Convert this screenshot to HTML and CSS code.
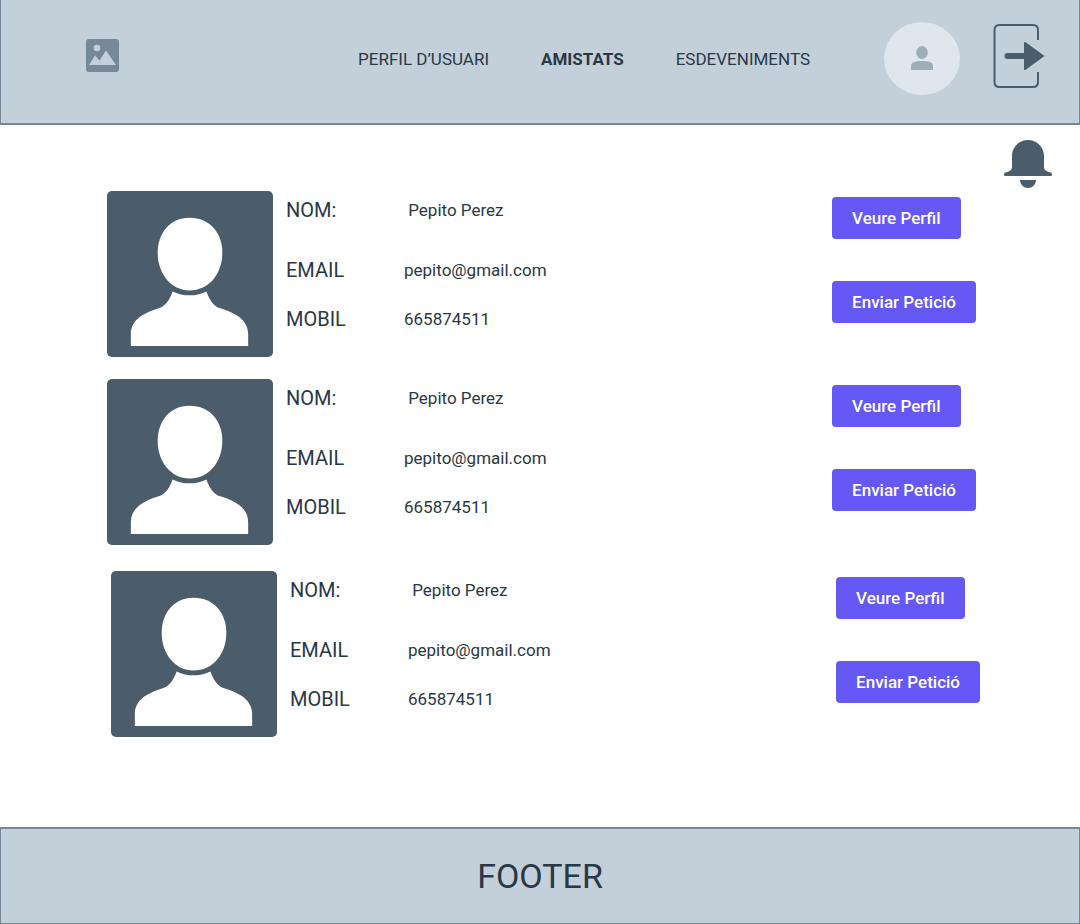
FILE: index.html
```html
<!DOCTYPE html>
<html lang="ca">
<head>
<meta charset="utf-8">
<meta name="viewport" content="width=device-width, initial-scale=1">
<title>Amistats</title>
<link rel="stylesheet" href="styles.css">
</head>
<body>
<svg class="sprite" aria-hidden="true">
  <symbol id="portrait" viewBox="0 0 167 167">
    <rect width="167" height="167" rx="5" fill="#4b5c6b"/>
    <path fill="#fff" d="M83 27C104 27 116 43 116 62C116 84 102 100 83 100C65 100 51 84 51 62C51 43 63 27 83 27Z"/>
    <path fill="#fff" d="M66 101Q83 109 100 101C103 109 107 116 114 118C130 123 142 130 142 144V156H24V144C24 130 36 123 52 118C60 115 63 109 66 101Z"/>
  </symbol>
</svg>

<header class="header">
  <a class="logo" href="#" aria-label="Inici">
    <svg width="34" height="40" viewBox="0 0 34 40" aria-hidden="true">
      <rect x="0" y="0" width="33" height="33" rx="3" fill="#778899"/>
      <circle cx="11" cy="9" r="3.3" fill="#c3cfd9"/>
      <path d="M3 26L9 16.500L13.500 21.500L20 11.500L30 26Z" fill="#c3cfd9"/>
    </svg>
  </a>
  <nav class="nav">
    <a class="nav-link" href="#">PERFIL D’USUARI</a>
    <a class="nav-link nav-link-active" href="#" aria-current="page">AMISTATS</a>
    <a class="nav-link" href="#">ESDEVENIMENTS</a>
  </nav>
  <div class="account">
    <a href="#" aria-label="El meu compte">
      <svg width="76" height="73" viewBox="0 0 76 73" aria-hidden="true">
        <ellipse cx="38" cy="36.500" rx="38" ry="36.500" fill="#dfe6ee"/>
        <ellipse cx="38" cy="30.500" rx="5.800" ry="6.500" fill="#9eadba"/>
        <path d="M27 48V44C27 40 32 39 38 39S49 40 49 44V48Z" fill="#9eadba"/>
      </svg>
    </a>
    <button class="icon-button" type="button" aria-label="Tancar sessió">
      <svg width="52" height="73" viewBox="0 0 52 73" aria-hidden="true">
        <path d="M45 18V8Q45 3 40 3H6.500Q1.500 3 1.500 8V60Q1.500 65 6.500 65H40Q45 65 45 60V50" fill="none" stroke="#4b5c6b" stroke-width="2"/>
        <path d="M14.500 31H31V20.500Q31.500 19.500 33 20.500L51.500 34L33 47.500Q31.500 48.500 31 47.500V37H14.500A3 3 0 0 1 14.500 31Z" fill="#4b5c6b"/>
      </svg>
    </button>
  </div>
</header>

<main class="main">
  <div class="alerts">
    <button class="icon-button" type="button" aria-label="Notificacions">
      <svg width="48" height="48" viewBox="0 0 48 48" aria-hidden="true" fill="#4b5c6b">
        <path d="M24 0C15 0 8 7 8 16V27Q8 31 3 32Q0 32.500 0 34V35Q0 36 1.500 36H46.500Q48 36 48 35V34Q48 32.500 45 32Q40 31 40 27V16C40 7 33 0 24 0Z"/>
        <path d="M16 40H32A8 8 0 0 1 16 40Z"/>
      </svg>
    </button>
  </div>

  <ul class="friends">
    <li class="friend">
      <svg class="portrait" role="img" aria-label="Foto de Pepito Perez"><use href="#portrait"/></svg>
      <dl class="details">
        <dt>NOM:</dt><dd>&nbsp;Pepito Perez</dd>
        <dt>EMAIL</dt><dd>pepito@gmail.com</dd>
        <dt>MOBIL</dt><dd>665874511</dd>
      </dl>
      <div class="actions">
        <button class="button" type="button">Veure Perfil</button>
        <button class="button" type="button">Enviar Petició</button>
      </div>
    </li>
    <li class="friend">
      <svg class="portrait" role="img" aria-label="Foto de Pepito Perez"><use href="#portrait"/></svg>
      <dl class="details">
        <dt>NOM:</dt><dd>&nbsp;Pepito Perez</dd>
        <dt>EMAIL</dt><dd>pepito@gmail.com</dd>
        <dt>MOBIL</dt><dd>665874511</dd>
      </dl>
      <div class="actions">
        <button class="button" type="button">Veure Perfil</button>
        <button class="button" type="button">Enviar Petició</button>
      </div>
    </li>
    <li class="friend friend-last">
      <svg class="portrait" role="img" aria-label="Foto de Pepito Perez"><use href="#portrait"/></svg>
      <dl class="details">
        <dt>NOM:</dt><dd>&nbsp;Pepito Perez</dd>
        <dt>EMAIL</dt><dd>pepito@gmail.com</dd>
        <dt>MOBIL</dt><dd>665874511</dd>
      </dl>
      <div class="actions">
        <button class="button" type="button">Veure Perfil</button>
        <button class="button" type="button">Enviar Petició</button>
      </div>
    </li>
  </ul>
</main>

<footer class="footer">FOOTER</footer>
</body>
</html>
```
FILE: styles.css
```css
* {
  box-sizing: border-box;
}

body {
  margin: 0;
  min-height: 100vh;
  display: flex;
  flex-direction: column;
  background: #fff;
  color: #293845;
  font-family: Roboto, "Liberation Sans", sans-serif;
  font-size: 17px;
  line-height: 24px;
}

svg {
  display: block;
}

.sprite {
  width: 0;
  height: 0;
  position: absolute;
}

.header {
  display: flex;
  align-items: center;
  padding: 22px 34px 28px 85px;
  background: #c3cfd9;
  border: 1px solid #778899;
  border-width: 0 1px 2px;
}

.nav {
  display: flex;
  gap: 52px;
  margin-left: auto;
  margin-right: 74px;
}

.nav-link {
  color: inherit;
  text-decoration: none;
}

.nav-link-active {
  font-weight: 700;
}

.account {
  display: flex;
  align-items: center;
  gap: 33px;
}

.icon-button {
  padding: 0;
  border: 0;
  background: none;
  cursor: pointer;
}

.main {
  flex: 1;
}

.alerts {
  display: flex;
  justify-content: flex-end;
  padding: 15px 28px 3px;
}

.friends {
  display: flex;
  flex-direction: column;
  gap: 22px;
  margin: 0;
  padding: 0 104px 24px 107px;
  list-style: none;
}

.friend {
  display: flex;
  gap: 13px;
}

.friend-last {
  margin: 4px -4px 0 4px;
}

.portrait {
  flex: none;
  width: 166px;
  height: 166px;
}

.details {
  flex: 1;
  display: grid;
  grid-template-columns: 118px 1fr;
  grid-template-rows: 60px 49px 48px;
  margin: 0;
  padding-top: 7px;
}

.details dt {
  font-size: 20px;
}

.details dd {
  margin: 0;
}

.actions {
  display: flex;
  flex-direction: column;
  align-items: flex-start;
  gap: 42px;
  padding-top: 6px;
}

.button {
  height: 42px;
  padding: 0 20px;
  border: 0;
  border-radius: 4px;
  background: #6558f5;
  color: #fff;
  font: inherit;
  font-weight: 500;
  cursor: pointer;
}

.footer {
  padding: 23px 0;
  background: #c3cfd9;
  border: 1px solid #778899;
  border-top-width: 2px;
  font-size: 34px;
  line-height: 48px;
  text-align: center;
}
```
